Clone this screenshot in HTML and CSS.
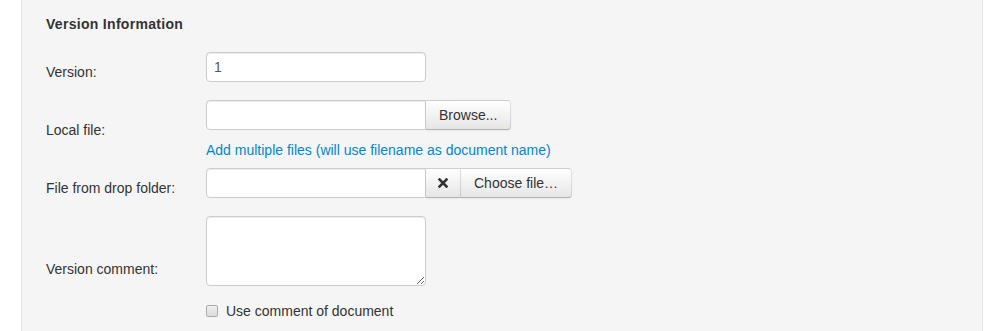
FILE: index.html
```html
<!DOCTYPE html>
<html lang="en">
<head>
    <meta charset="UTF-8">
    <meta name="viewport" content="width=device-width, initial-scale=1.0">
    <title>Version Information</title>
    <link rel="stylesheet" href="styles.css">
</head>
<body>
    <div class="well">
        <h4 class="section-title">Version Information</h4>

        <!-- version number -->
        <div class="form-row">
            <label class="control-label">Version:</label>
            <div class="controls">
                <input type="text" class="text-input" value="1">
            </div>
        </div>

        <!-- upload from local disk -->
        <div class="form-row">
            <label class="control-label">Local file:</label>
            <div class="controls">
                <div class="input-append">
                    <input type="text" class="text-input">
                    <button class="btn btn-last">Browse...</button>
                </div>
                <a href="#" class="add-link">Add multiple files (will use filename as document name)</a>
            </div>
        </div>

        <!-- drop folder -->
        <div class="form-row">
            <label class="control-label">File from drop folder:</label>
            <div class="controls">
                <div class="input-append">
                    <input type="text" class="text-input">
                    <button class="btn btn-icon">
                        <svg width="10" height="10" viewBox="0 0 10 10">
                            <path d="M1.5 1.5 L8.5 8.5 M8.5 1.5 L1.5 8.5" stroke="#333" stroke-width="2.6" stroke-linecap="square"/>
                        </svg>
                    </button>
                    <button class="btn btn-last">Choose file…</button>
                </div>
            </div>
        </div>

        <!-- comment -->
        <div class="form-row">
            <label class="control-label">Version comment:</label>
            <div class="controls">
                <textarea class="text-area" rows="3"></textarea>
                <label class="checkbox">
                    <input type="checkbox" class="check">
                    Use comment of document
                </label>
            </div>
        </div>
    </div>
</body>
</html>
```

FILE: styles.css
```css
/* page frame */
body {
    margin: 0;
    background-color: #fff;
    font-family: "Liberation Sans", Arial, sans-serif;
    font-size: 14px;
    line-height: 20px;
    color: #333;
}

.well {
    box-sizing: border-box;
    width: 962px;
    min-height: 331px;
    margin-left: 21px;
    padding: 14px 24px 0 24px;
    background-color: #f5f5f5;
    border-left: 1px solid #e3e3e3;
    border-right: 1px solid #e3e3e3;
}

.section-title {
    margin: 0 0 18px 0;
    font-size: 14px;
    line-height: 20px;
    font-weight: bold;
    letter-spacing: 0.3px;
    color: #333;
}

/* one label + controls row */
.form-row {
    display: grid;
    grid-template-columns: 160px 1fr;
    align-items: center;
    margin-bottom: 8px;
}

.control-label {
    color: #333;
}

.controls {
    display: flex;
    flex-direction: column;
    align-items: flex-start;
}

.text-input {
    box-sizing: border-box;
    width: 220px;
    height: 30px;
    margin: 0 0 10px 0;
    padding: 4px 7px;
    font-family: inherit;
    font-size: 14px;
    line-height: 20px;
    color: #555;
    background-color: #fff;
    border: 1px solid #ccc;
    border-radius: 4px;
    box-shadow: inset 0 1px 1px rgba(0, 0, 0, 0.075);
    outline: none;
}

.input-append {
    display: flex;
    margin-bottom: 10px;
}

.input-append .text-input {
    margin-bottom: 0;
    border-radius: 4px 0 0 4px;
}

.btn {
    box-sizing: border-box;
    height: 30px;
    margin-left: 0;
    padding: 4px 13px;
    font-family: inherit;
    font-size: 14px;
    line-height: 20px;
    color: #333;
    background-color: #f5f5f5;
    background-image: linear-gradient(to bottom, #fff, #e6e6e6);
    border: 1px solid #ccc;
    border-color: rgba(0, 0, 0, 0.1) rgba(0, 0, 0, 0.1) rgba(0, 0, 0, 0.25);
    border-bottom-color: #b3b3b3;
    border-left-width: 0;
    border-radius: 0;
    box-shadow: inset 0 1px 0 rgba(255, 255, 255, 0.2), 0 1px 2px rgba(0, 0, 0, 0.05);
    cursor: pointer;
}

.btn-last {
    border-radius: 0 4px 4px 0;
}

.btn-icon {
    width: 35px;
    padding: 0;
    display: flex;
    align-items: center;
    justify-content: center;
}

.add-link {
    color: #0088cc;
    text-decoration: none;
}

.text-area {
    box-sizing: border-box;
    width: 220px;
    height: 70px;
    margin: 0 0 10px 0;
    padding: 4px 6px;
    font-family: inherit;
    font-size: 14px;
    line-height: 20px;
    color: #555;
    background-color: #fff;
    border: 1px solid #ccc;
    border-radius: 4px;
    box-shadow: inset 0 1px 1px rgba(0, 0, 0, 0.075);
    outline: none;
}

.checkbox {
    display: flex;
    align-items: center;
    gap: 8px;
    padding-top: 5px;
    color: #333;
}

.check {
    appearance: none;
    box-sizing: border-box;
    width: 12px;
    height: 12px;
    margin: 0;
    background-image: linear-gradient(to bottom, #f0f0f0, #dcdcdc);
    border: 1px solid #aaa;
    border-radius: 2px;
}
```
